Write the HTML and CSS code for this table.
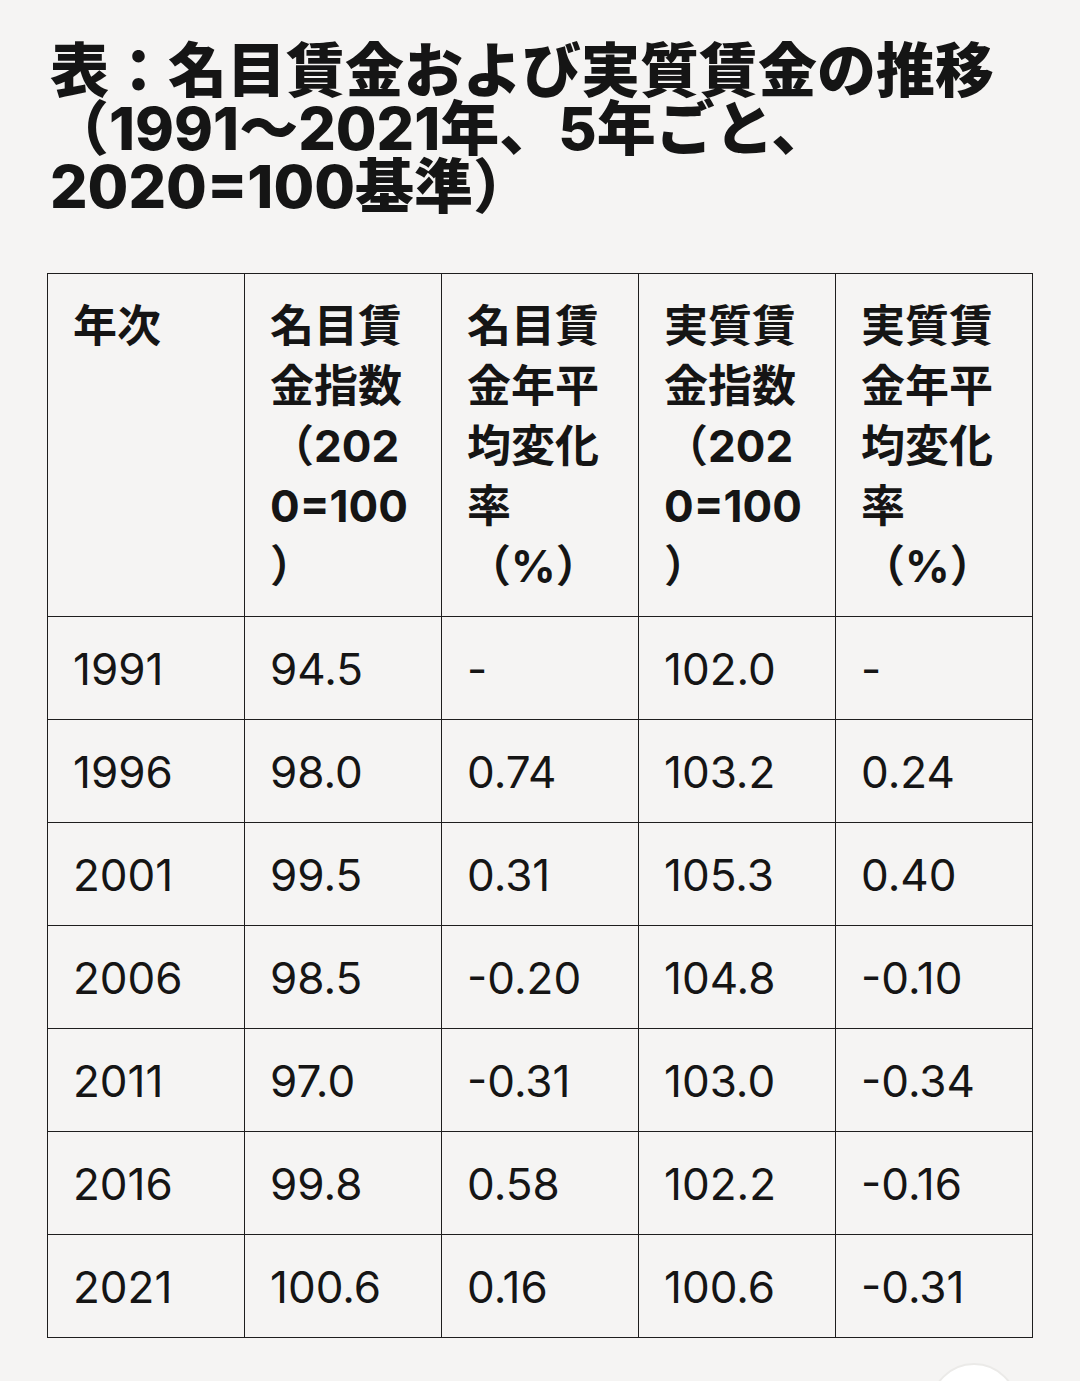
FILE: index.html
```html
<!DOCTYPE html>
<html lang="ja">
<head>
<meta charset="utf-8">
<link rel="stylesheet" href="styles.css">
</head>
<body>
<main class="page">
  <h1 class="title">表：名目賃金および実質賃金の推移（1991～2021年、5年ごと、2020=100基準）</h1>
  <table class="data">
    <thead>
      <tr>
        <th>年次</th>
        <th>名目賃金指数（2020=100）</th>
        <th>名目賃金年平均変化率（%）</th>
        <th>実質賃金指数（2020=100）</th>
        <th>実質賃金年平均変化率（%）</th>
      </tr>
    </thead>
    <tbody>
      <tr><td>1991</td><td>94.5</td><td>-</td><td>102.0</td><td>-</td></tr>
      <tr><td>1996</td><td>98.0</td><td>0.74</td><td>103.2</td><td>0.24</td></tr>
      <tr><td>2001</td><td>99.5</td><td>0.31</td><td>105.3</td><td>0.40</td></tr>
      <tr><td>2006</td><td>98.5</td><td>-0.20</td><td>104.8</td><td>-0.10</td></tr>
      <tr><td>2011</td><td>97.0</td><td>-0.31</td><td>103.0</td><td>-0.34</td></tr>
      <tr><td>2016</td><td>99.8</td><td>0.58</td><td>102.2</td><td>-0.16</td></tr>
      <tr><td>2021</td><td>100.6</td><td>0.16</td><td>100.6</td><td>-0.31</td></tr>
    </tbody>
  </table>
</main>
<div class="fab-clip"><div class="fab"></div></div>
</body>
</html>
```

FILE: styles.css
```css
html, body {
  margin: 0;
  padding: 0;
  background: #f5f4f3;
  overflow: hidden;
}
body {
  font-family: "Inter", "Noto Sans CJK JP", sans-serif;
  color: #151515;
  height: 1381px;
  position: relative;
}
.page {
  padding: 42px 48px 0 48px;
}
.title {
  margin: 0 0 57px 2px;
  font-size: 59px;
  line-height: 58px;
  font-weight: 800;
  letter-spacing: 0;
}
.data {
  width: 986px;
  margin-left: -1px;
  border-collapse: collapse;
  table-layout: fixed;
}
.data th,
.data td {
  border: 1px solid #1e1e1e;
  text-align: left;
  padding: 21px 20px 21px 25px;
  overflow-wrap: anywhere;
}
.data th {
  font-size: 44px;
  line-height: 60px;
  font-weight: 700;
  vertical-align: top;
  padding-top: 22px;
  padding-bottom: 20px;
}
.data td {
  font-size: 44px;
  line-height: 60px;
  font-weight: 400;
  vertical-align: middle;
  padding-top: 22px;
  padding-bottom: 20px;
}
.fab-clip {
  position: absolute;
  left: 928px;
  top: 1363px;
  width: 90px;
  height: 18px;
  overflow: hidden;
}
.fab {
  width: 84px;
  height: 84px;
  margin-left: 2px;
  border-radius: 50%;
  background: #ffffff;
  border: 2px solid #ebeae8;
}
```
